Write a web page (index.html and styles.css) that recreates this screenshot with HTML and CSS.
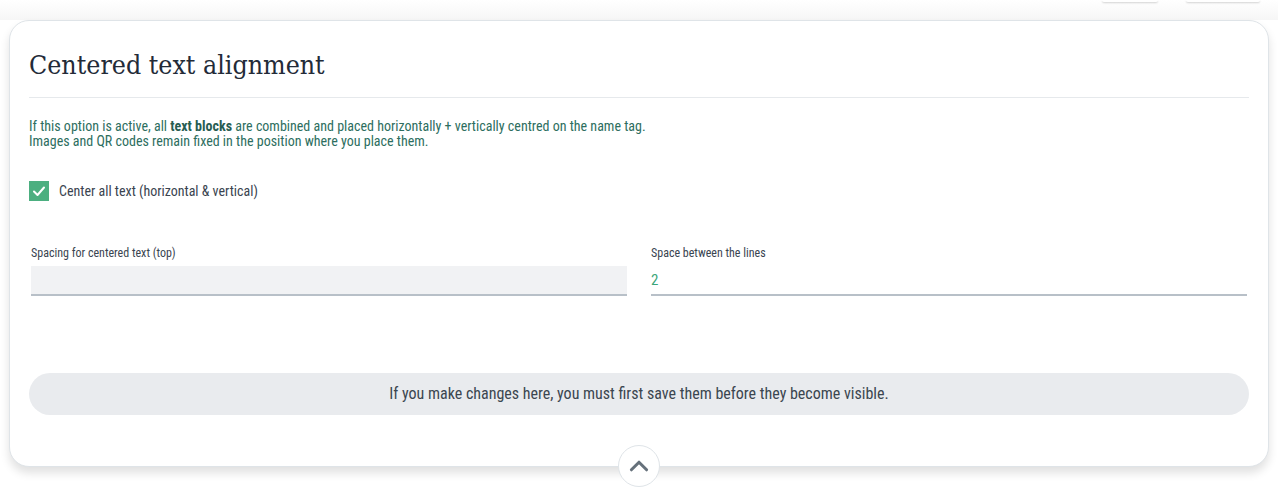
FILE: index.html
```html
<!DOCTYPE html>
<html lang="en">
<head>
    <meta charset="UTF-8">
    <meta name="viewport" content="width=device-width, initial-scale=1.0">
    <title>Centered text alignment</title>
    <link rel="stylesheet" href="styles.css">
</head>
<body>
    <div class="top-actions">
        <span class="top-btn small"></span>
        <span class="top-btn wide"></span>
    </div>

    <div class="card">
        <h2 class="card-title">Centered text alignment</h2>

        <p class="hint">
            If this option is active, all <strong>text blocks</strong> are combined and placed horizontally + vertically centred on the name tag.<br>
            Images and QR codes remain fixed in the position where you place them.
        </p>

        <label class="check-row">
            <span class="checkbox">
                <svg viewBox="0 0 20 20" width="20" height="20">
                    <path d="M5 10.5 L8.5 14 L15 6.5" fill="none" stroke="#fff" stroke-width="2" stroke-linecap="round" stroke-linejoin="round"/>
                </svg>
            </span>
            <span class="check-label">Center all text (horizontal &amp; vertical)</span>
        </label>

        <div class="fields">
            <div class="field">
                <span class="field-label">Spacing for centered text (top)</span>
                <div class="field-input filled"></div>
            </div>
            <div class="field">
                <span class="field-label">Space between the lines</span>
                <div class="field-input">2</div>
            </div>
        </div>

        <div class="notice">If you make changes here, you must first save them before they become visible.</div>

        <button class="collapse" type="button">
            <svg viewBox="0 0 24 24" width="26" height="26">
                <path d="M5 15.5 L12 8.5 L19 15.5" fill="none" stroke="#66717b" stroke-width="2.8" stroke-linecap="round" stroke-linejoin="round"/>
            </svg>
        </button>
    </div>
</body>
</html>
```

FILE: styles.css
```css
* {
    margin: 0;
    padding: 0;
    box-sizing: border-box;
}

body {
    background: #fff;
    font-family: 'Liberation Sans Narrow', 'Roboto Condensed', Roboto, sans-serif;
    padding: 0 9px;
    height: 502px;
    overflow: hidden;
}

.top-actions {
    display: flex;
    justify-content: flex-end;
    gap: 28px;
    height: 20px;
    padding-right: 18px;
    background: linear-gradient(#fff, #f6f6f6);
    margin: 0 -9px;
}

.top-btn {
    display: block;
    height: 2px;
    background: #fff;
    border-radius: 0 0 8px 8px;
    box-shadow: 0 1px 2px rgba(0, 0, 0, 0.18);
}

.top-btn.small {
    width: 56px;
}

.top-btn.wide {
    width: 74px;
}

.card {
    position: relative;
    background: #fff;
    border: 1px solid #dfe4e8;
    border-radius: 20px;
    box-shadow: 0 6px 10px rgba(0, 0, 0, 0.12);
    padding: 26px 19px 50px;
    height: 447px;
}

.card-title {
    font-family: 'DejaVu Serif Condensed', 'DejaVu Serif', serif;
    font-weight: normal;
    font-size: 26.5px;
    color: #232b38;
    line-height: 36px;
    padding-bottom: 14px;
    border-bottom: 1px solid #e6e9ec;
}

.hint {
    margin-top: 21px;
    font-size: 14px;
    line-height: 15px;
    color: #2d6e60;
}

.hint strong {
    color: #285d52;
}

.check-row {
    display: flex;
    align-items: center;
    gap: 10px;
    margin-top: 32px;
}

.checkbox {
    width: 20px;
    height: 20px;
    background: #4caf80;
    display: flex;
}

.check-label {
    font-size: 14px;
    color: #3a4450;
}

.fields {
    display: grid;
    grid-template-columns: 1fr 1fr;
    gap: 24px;
    padding: 0 2px;
    margin-top: 45px;
}

.field-label {
    display: block;
    font-size: 12px;
    line-height: 14px;
    color: #3a4450;
    margin-bottom: 6px;
}

.field-input {
    height: 30px;
    border-bottom: 2px solid #b8c0c8;
    font-size: 15px;
    color: #3aa579;
    line-height: 28px;
}

.field-input.filled {
    background: #f1f2f4;
}

.notice {
    margin-top: 77px;
    background: #e9ebee;
    border-radius: 21px;
    height: 42px;
    line-height: 42px;
    text-align: center;
    font-size: 16px;
    color: #3b4650;
}

.collapse {
    position: absolute;
    left: 50%;
    bottom: -21px;
    transform: translateX(-50%);
    width: 42px;
    height: 42px;
    border-radius: 50%;
    background: #fff;
    border: 1px solid #dfe4e8;
    display: flex;
    align-items: center;
    justify-content: center;
    cursor: pointer;
}
```
